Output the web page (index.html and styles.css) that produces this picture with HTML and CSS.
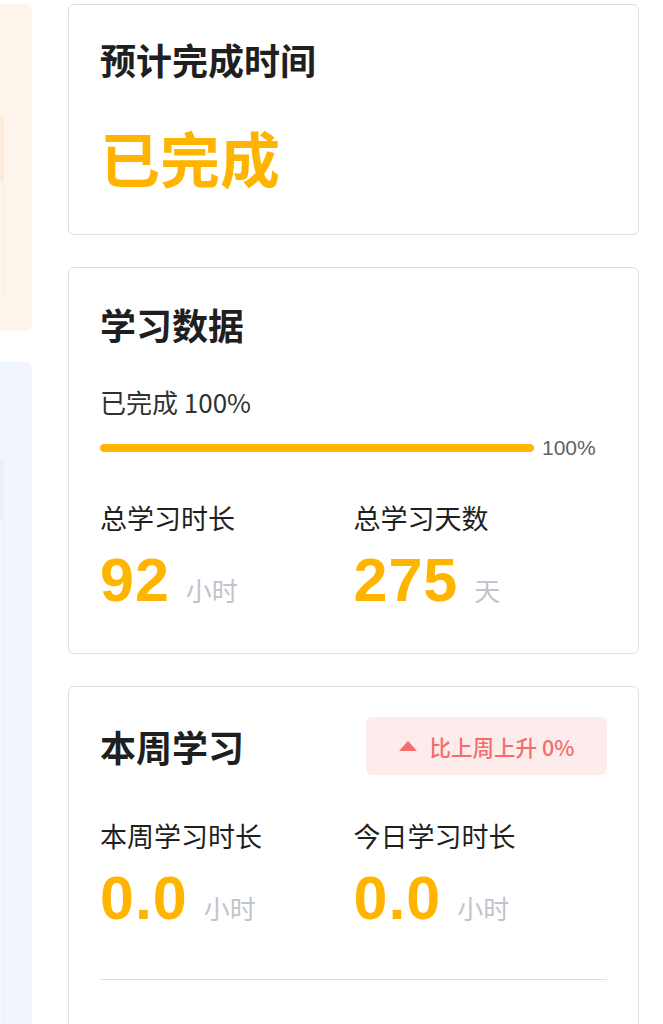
FILE: index.html
```html
<!DOCTYPE html>
<html lang="zh-CN">
<head>
    <meta charset="UTF-8">
    <meta name="viewport" content="width=device-width, initial-scale=1.0">
    <title>学习概览</title>
    <link rel="stylesheet" href="styles.css">
</head>
<body>
    <div class="side">
        <div class="side-panel side-orange">
            <div class="side-tab"></div>
            <div class="side-edge"></div>
        </div>
        <div class="side-panel side-blue">
            <div class="side-tab"></div>
            <div class="side-edge"></div>
        </div>
    </div>

    <div class="main">
        <!-- finish time -->
        <div class="card card-finish">
            <div class="card-title">预计完成时间</div>
            <div class="finish-text">已完成</div>
        </div>

        <!-- study data -->
        <div class="card card-data">
            <div class="card-title">学习数据</div>
            <div class="progress-text">已完成 100%</div>
            <div class="progress-row">
                <div class="progress-bar">
                    <div class="progress-fill" style="width: 100%"></div>
                </div>
                <span class="progress-label">100%</span>
            </div>
            <div class="stats">
                <div class="stat">
                    <div class="stat-label">总学习时长</div>
                    <div class="stat-value"><span class="num">92</span><span class="unit">小时</span></div>
                </div>
                <div class="stat">
                    <div class="stat-label">总学习天数</div>
                    <div class="stat-value"><span class="num">275</span><span class="unit">天</span></div>
                </div>
            </div>
        </div>

        <!-- this week -->
        <div class="card card-week">
            <div class="week-head">
                <div class="card-title">本周学习</div>
                <div class="trend"><span class="trend-arrow"></span>比上周上升 0%</div>
            </div>
            <div class="stats">
                <div class="stat">
                    <div class="stat-label">本周学习时长</div>
                    <div class="stat-value"><span class="num">0.0</span><span class="unit">小时</span></div>
                </div>
                <div class="stat">
                    <div class="stat-label">今日学习时长</div>
                    <div class="stat-value"><span class="num">0.0</span><span class="unit">小时</span></div>
                </div>
            </div>
            <div class="divider"></div>
        </div>
    </div>
</body>
</html>
```

FILE: styles.css
```css
body {
    font-family: "Noto Sans CJK SC", "Noto Sans", sans-serif;
    background-color: #fff;
    margin: 0;
    padding: 0;
    display: flex;
    gap: 36px;
    color: #303133;
}

/* cut-off cards on the left edge */
.side {
    width: 32px;
    flex: none;
    display: flex;
    flex-direction: column;
    gap: 31px;
    padding-top: 4px;
}

.side-panel {
    border-radius: 0 7px 7px 0;
}

.side-orange {
    background-color: #fdf5eb;
    height: 327px;
    padding-top: 114px;
    box-sizing: border-box;
}

.side-orange .side-tab {
    width: 4px;
    height: 64px;
    background-color: #fbecd9;
}

.side-orange .side-edge {
    width: 3px;
    height: 114px;
    border-right: 1px solid #f9ebd9;
}

.side-blue {
    background-color: #f1f5fd;
    height: 700px;
    padding-top: 98px;
    box-sizing: border-box;
}

.side-blue .side-tab {
    width: 4px;
    height: 60px;
    background-color: #eaf0fb;
}

.side-blue .side-edge {
    width: 3px;
    height: 500px;
    border-right: 1px solid #e6ecf8;
}

.main {
    width: 571px;
    flex: none;
    display: flex;
    flex-direction: column;
    gap: 32px;
    padding-top: 4px;
}

.card {
    border: 1px solid #dcdfe6;
    border-radius: 6px;
    padding: 38px 31px 44px;
}

.card-finish {
    padding-top: 36px;
    padding-bottom: 47px;
}

.card-title {
    font-size: 36px;
    line-height: 1;
    font-weight: 700;
    color: #1f1f1f;
}

.finish-text {
    margin-top: 50px;
    font-size: 60px;
    line-height: 1;
    font-weight: 700;
    color: #ffb400;
}

.progress-text {
    margin-top: 47px;
    font-size: 26px;
    line-height: 1;
    color: #303133;
}

.progress-row {
    margin-top: 21px;
    height: 24px;
    display: flex;
    align-items: center;
}

.progress-bar {
    flex: 1;
    height: 8px;
    border-radius: 4px;
    background-color: #ebeef5;
    overflow: hidden;
}

.progress-fill {
    height: 100%;
    border-radius: 4px;
    background-color: #ffb400;
}

.progress-label {
    width: 65px;
    margin-left: 8px;
    font-family: "Liberation Sans", "Noto Sans", sans-serif;
    font-size: 21px;
    color: #606266;
}

.stats {
    display: grid;
    grid-template-columns: 1fr 1fr;
}

.card-data .stats {
    margin-top: 44px;
}

.card-data {
    padding-bottom: 43px;
}

.stat-label {
    font-size: 27px;
    line-height: 1;
    color: #1f1f1f;
}

.stat-value {
    margin-top: 19px;
    height: 60px;
    display: flex;
    align-items: baseline;
}

.num {
    font-family: "Liberation Sans", Arial, sans-serif;
    font-size: 61px;
    line-height: 60px;
    font-weight: 700;
    letter-spacing: 1px;
    color: #ffb400;
}

.unit {
    margin-left: 16px;
    font-size: 26px;
    color: #c0c4cc;
}

.card-week {
    padding-top: 30px;
    padding-bottom: 100px;
}

.week-head {
    height: 58px;
    display: flex;
    align-items: center;
    justify-content: space-between;
}

.trend {
    width: 241px;
    height: 58px;
    border-radius: 6px;
    background-color: #fdecec;
    color: #f56c6c;
    font-size: 21.5px;
    font-weight: 500;
    display: flex;
    align-items: center;
    justify-content: center;
    gap: 13px;
}

.trend-arrow {
    width: 0;
    height: 0;
    border-left: 9.5px solid transparent;
    border-right: 9.5px solid transparent;
    border-bottom: 10px solid #f56c6c;
}

.card-week .stats {
    margin-top: 47px;
}

.divider {
    margin-top: 51px;
    height: 1px;
    background-color: #dcdfe6;
}
```
